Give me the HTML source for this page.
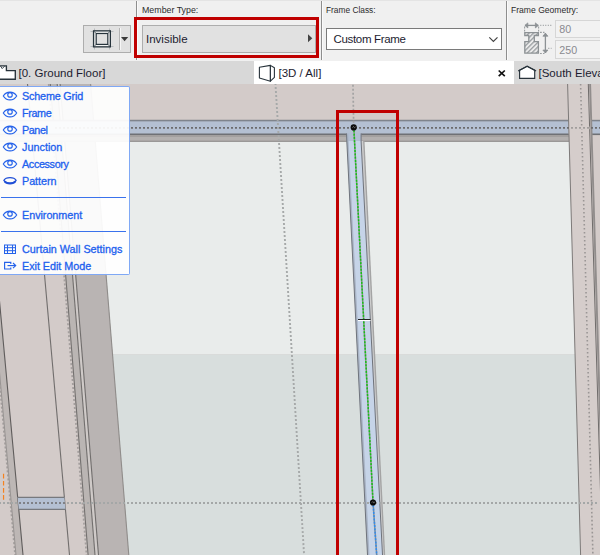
<!DOCTYPE html>
<html><head><meta charset="utf-8">
<style>
html,body{margin:0;padding:0;}
body{width:600px;height:555px;overflow:hidden;position:relative;background:#d3cbc9;font-family:"Liberation Sans",sans-serif;}
.abs{position:absolute;}
#toolbar{left:0;top:0;width:600px;height:61px;background:#f0f0f0;}
#tabbar{left:0;top:61px;width:600px;height:23px;background:#d8d8d8;}
.lbl{position:absolute;top:4.500px;font-size:9.200px;line-height:11px;color:#2c2c2c;white-space:nowrap;transform-origin:0 0;}
.tabtxt{position:absolute;top:5px;font-size:11.5px;line-height:14px;color:#1c1c30;white-space:nowrap;}
.vsep{position:absolute;width:1px;background:#8e8e8e;top:1px;height:59px;}.vsep.w{background:#fafafa;}
.btn{position:absolute;background:#e1e1e1;border:1px solid #adadad;box-sizing:border-box;}
.inp{position:absolute;background:#f2f2f2;border:1px solid #d6d6d6;box-sizing:border-box;font-size:10.700px;color:#8a8a90;line-height:16px;padding-left:3.300px;}
#scene{left:0;top:84px;}
#panel{left:0;top:86px;width:129px;height:187px;background:rgba(255,255,255,0.93);border:1px solid #7fa8f5;border-left:none;border-radius:0 2px 2px 0;}
.mi{position:absolute;left:22px;font-size:10.8px;line-height:13px;color:#1c60ee;white-space:nowrap;-webkit-text-stroke:0.3px #1c60ee;}
.msep{position:absolute;left:1px;width:125px;height:1.200px;background:#3a72ec;}
</style></head><body>

<svg id="scene" class="abs" width="600" height="471" viewBox="0 84 600 471">
  <rect x="0" y="84" width="600" height="471" fill="#d3cbc9"/>
  <!-- glass panels -->
  <polygon points="95,141 569.200,141 575.100,354.300 112.600,354.300" fill="#e9eceb"/>
  <polygon points="112.600,354.300 575.100,354.300 580.600,555 128.800,555" fill="#d8dedd"/>
  <!-- left column shaded faces -->
  <polygon points="50.200,84 57.200,84 95,555 88,555" fill="#bab5b3"/>
  <polygon points="59.400,84 90.600,84 128.800,555 98,555" fill="#b9b4b3"/>
  <polygon points="57.200,84 60.100,84 98.500,555 95,555" fill="#cfcac8"/>
  <polygon points="-20.6,84 -27,84 15.5,555 23,555" fill="#bdb7b5"/>
  <g stroke="#716e6d" stroke-width="1.100" fill="none">
    <line x1="27.5" y1="84" x2="69.5" y2="555"/>
    <line x1="57.2" y1="84" x2="95" y2="555"/>
    <line x1="60.100" y1="84" x2="98.500" y2="555"/>
    <line x1="90.6" y1="84" x2="128.8" y2="555" stroke="#8f8c8a"/>
    <line x1="-27.500" y1="84" x2="15" y2="555" stroke="#a49f9e" stroke-width="1.600" stroke-dasharray="2 2"/><line x1="-26.500" y1="84" x2="16" y2="555" stroke="#8f8c8a" stroke-width="0.800"/>
    <line x1="-20.600" y1="84" x2="23" y2="555" stroke="#5f5c5b" stroke-width="1.100"/>
  </g>
  <line x1="48.700" y1="84" x2="86.500" y2="555" stroke="#a49f9e" stroke-width="1.700" stroke-dasharray="2 2"/><line x1="50.300" y1="84" x2="88.100" y2="555" stroke="#747170" stroke-width="1.100"/>
  <!-- right column -->
  <polygon points="567.600,84 588.600,84 600,478 600,555 580.600,555" fill="#d5cdcb"/>
  
  <!-- horizontal band -->
  <rect x="0" y="120" width="568.500" height="14.500" fill="#b4c0d2"/>
  <rect x="0" y="134" width="569" height="7.800" fill="#a3a09f"/><rect x="0" y="137" width="569" height="3.400" fill="#b3b0af"/>
  <rect x="591.400" y="120" width="9" height="14.500" fill="#b4c0d2"/>
  <g stroke="#6f7175" stroke-width="1">
    <line x1="0" y1="120.400" x2="568.500" y2="120.400" stroke="#7f848c" stroke-width="1.200"/><line x1="0" y1="121.500" x2="568.500" y2="121.500" stroke="#a2abb9"/>
    <line x1="0" y1="134.300" x2="568.700" y2="134.300" stroke-width="1.600"/>
    <line x1="591.400" y1="120.400" x2="600" y2="120.400" stroke="#7f848c" stroke-width="1.200"/><line x1="591.400" y1="121.500" x2="600" y2="121.500" stroke="#a2abb9"/>
    <line x1="591.400" y1="134.300" x2="600" y2="134.300" stroke-width="1.600"/>
  </g>
  <line x1="0" y1="141.5" x2="569" y2="141.5" stroke="#9a9897" stroke-width="1"/>
  <g stroke="#7d7a79" stroke-width="1" fill="none">
    <line x1="567.6" y1="84" x2="580.6" y2="555"/>
    <line x1="588.300" y1="84" x2="602.400" y2="555" stroke="#6f6c6b"/>
    <line x1="590.100" y1="84" x2="604.200" y2="555" stroke="#918d8c" stroke-width="1.900"/>
  </g>
  <line x1="580.6" y1="84" x2="592.9" y2="555" stroke="#9a9695" stroke-width="1.6" stroke-dasharray="1.6 2.4"/>
  <!-- horizontal dotted lines -->
  <line x1="55" y1="127.900" x2="600" y2="127.900" stroke="#6c6c6e" stroke-width="1.900" stroke-dasharray="2 2"/>
  <clipPath id="cc"><polygon points="569.300,120 589.300,120 589.800,136 569.800,136"/></clipPath>
  <g clip-path="url(#cc)"><line x1="55" y1="127.900" x2="600" y2="127.900" stroke="#d5cdcb" stroke-width="2.600"/><line x1="55" y1="127.900" x2="600" y2="127.900" stroke="#a29e9d" stroke-width="1.900" stroke-dasharray="2 2"/></g>
  <!-- small blue band bottom-left -->
  <polygon points="17.600,497 64.300,497 65.500,509.500 18.800,509.500" fill="#b4c0d2"/><line x1="17.600" y1="497.400" x2="64.300" y2="497.400" stroke="#77797d" stroke-width="1.200"/><line x1="18.800" y1="509.300" x2="65.500" y2="509.300" stroke="#77797d" stroke-width="1.200"/>
  <line x1="3.550" y1="473.800" x2="3.550" y2="500" stroke="#f5821f" stroke-width="1.200" stroke-dasharray="4.700 2.400"/>
  <!-- vertical dotted -->
  <line x1="275.400" y1="83" x2="304.200" y2="557" stroke="#a6a9a9" stroke-width="1.900" stroke-dasharray="2 2.008"/>
  <line x1="352.900" y1="80.800" x2="353.700" y2="127" stroke="#a3a3a3" stroke-width="1.700" stroke-dasharray="2 2"/>
  <!-- mullion -->
  <polygon points="361.100,141 363.800,141 384.500,555 382.500,555" fill="#cecece"/>
  <polygon points="346.500,133.400 361.100,133.400 361.100,141 382.500,555 367.500,555 346.800,141" fill="#c6d4e8"/>
  <polygon points="346.500,133 361.100,133 361.100,141 346.800,141" fill="#b2bfd3"/>
  <polygon points="346.500,133.400 346.800,141 367.500,555 369.500,555 348.600,141 348.300,133.400" fill="#aab5c6"/>
  <g stroke="#6f737b" stroke-width="1" fill="none">
    <polyline points="346.500,133.400 346.800,141 367.500,555"/>
    <polyline points="361.100,133.400 361.100,141 382.500,555"/>
    <line x1="363.800" y1="141" x2="384.500" y2="555" stroke="#a4a4a4" stroke-width="1.400"/>
  </g>
  <line x1="-1" y1="503" x2="598" y2="503" stroke="#a4a7a7" stroke-width="1.900" stroke-dasharray="2 2"/>
  <line x1="19" y1="503" x2="65" y2="503" stroke="#7f8186" stroke-width="1.900" stroke-dasharray="2 2"/>
  <line x1="353.800" y1="127" x2="373" y2="502" stroke="#8d8d8d" stroke-width="1.500"/>
  <line x1="353.800" y1="127" x2="373" y2="502" stroke="#14c414" stroke-width="1.500" stroke-dasharray="2 1.300"/>
  <line x1="373" y1="502" x2="376.700" y2="555" stroke="#8d8d8d" stroke-width="1.500"/>
  <line x1="373" y1="502" x2="376.700" y2="555" stroke="#2a8cf4" stroke-width="1.500" stroke-dasharray="2 1.300"/>
  <circle cx="353.700" cy="127.400" r="3.100" fill="#0c0c0c"/>
  <circle cx="373" cy="502.500" r="3.100" fill="#0c0c0c"/>
  <path d="M352.500,127.500 l1,-1 l1,1.200 l1,-0.800" stroke="#8a8a8a" stroke-width="0.800" fill="none"/>
  <path d="M371.800,502.600 l1,-1 l1,1.200 l1,-0.800" stroke="#8a8a8a" stroke-width="0.800" fill="none"/>
  <line x1="358" y1="319.500" x2="370.500" y2="319.500" stroke="#222" stroke-width="1"/>
  <line x1="358" y1="320.500" x2="370.500" y2="320.500" stroke="#fff" stroke-width="1"/>
  <!-- red highlight -->
  <rect x="337.5" y="111.5" width="60" height="460" fill="none" stroke="#c00000" stroke-width="3"/>
</svg>

<div id="toolbar" class="abs">
  <div class="abs" style="left:0;top:0;width:600px;height:1px;background:#e4e4e4"></div>
  <div class="vsep" style="left:136px"></div><div class="vsep w" style="left:137px"></div>
  <div class="vsep" style="left:321px"></div><div class="vsep w" style="left:322px"></div>
  <div class="vsep" style="left:506px"></div><div class="vsep w" style="left:507px"></div>
  <div class="lbl" style="left:141.500px;transform:scaleX(0.962)">Member Type:</div>
  <div class="lbl" style="left:326px;transform:scaleX(0.907)">Frame Class:</div>
  <div class="lbl" style="left:511px;transform:scaleX(0.933)">Frame Geometry:</div>
  <div class="btn" style="left:83px;top:25px;width:48px;height:28px"></div>
  <div class="abs" style="left:119px;top:28px;width:1px;height:22px;background:#b4b4b4"></div>
  <div class="abs" style="left:120px;top:28px;width:1px;height:22px;background:#f6f6f6"></div>
  <svg class="abs" style="left:88px;top:27px" width="44" height="24" viewBox="88 27 44 24">
    <g fill="none" stroke="#b9bcbf" stroke-width="1">
      <line x1="90.500" y1="31.500" x2="113.500" y2="31.500"/><line x1="90.500" y1="46.500" x2="113.500" y2="46.500"/>
      <line x1="94.500" y1="28.500" x2="94.500" y2="49.500"/><line x1="109.500" y1="28.500" x2="109.500" y2="49.500"/>
    </g>
    <rect x="93.550" y="30.850" width="16.800" height="16" fill="#f3f4f4" stroke="#27343c" stroke-width="1.300"/>
    <rect x="96.200" y="33.500" width="11.600" height="10.900" fill="#e1e1e1" stroke="#27343c" stroke-width="1.200"/>
    <g stroke="#27343c" stroke-width="0.700"><line x1="94" y1="31.300" x2="96" y2="33.300"/><line x1="110" y1="31.300" x2="108" y2="33.300"/><line x1="94" y1="46.500" x2="96" y2="44.500"/><line x1="110" y1="46.500" x2="108" y2="44.500"/></g>
    <polygon points="121,37 128.200,37 124.600,41.200" fill="#3a3a3a"/>
  </svg>
  <div class="btn" style="left:142px;top:25px;width:174px;height:28px"></div>
  <div class="txt abs" style="left:146px;top:32px;font-size:11.5px;line-height:14px;color:#1c1c30">Invisible</div>
  <svg class="abs" style="left:304px;top:32px" width="12" height="14" viewBox="304 32 12 14"><polygon points="308,34.300 308,42.200 312.300,38.250" fill="#444"/></svg>
  <div class="abs" style="left:134px;top:17px;width:179px;height:35px;border:3px solid #c00000;box-sizing:content-box"></div>
  <div class="abs" style="left:326px;top:28px;width:176px;height:22px;box-sizing:border-box;border:1px solid #7a7a7a;background:#fff"></div>
  <div class="txt abs" style="left:333.500px;top:32px;font-size:11.5px;line-height:14px;letter-spacing:-0.330px;color:#1c1c30">Custom Frame</div>
  <svg class="abs" style="left:486.500px;top:35px" width="14" height="10"><polyline points="2.300,2.400 6.400,6.500 10.500,2.400" fill="none" stroke="#444" stroke-width="1.200"/></svg>
  <div class="inp" style="left:555px;top:20px;width:50px;height:18px;padding-top:0"><span class="txt" style="position:relative;top:-0.500px">80</span></div>
  <div class="inp" style="left:555px;top:40px;width:50px;height:19px;padding-top:1.200px"><span class="txt">250</span></div>
  <svg class="abs" style="left:518px;top:18px" width="38" height="42" viewBox="518 18 38 42">
    <defs><pattern id="h" width="3.200" height="3.200" patternUnits="userSpaceOnUse" patternTransform="rotate(-45)"><rect width="3.200" height="3.200" fill="#ececec"/><rect width="3.200" height="1.300" fill="#9a9ea1"/></pattern></defs>
    <polygon points="524.800,32.700 538.400,32.700 538.400,35.500 534.300,35.500 534.300,41.600 538.400,41.600 538.400,53.100 524.800,53.100 524.800,41.600 528.800,41.600 528.800,35.500 524.800,35.500" fill="url(#h)" stroke="#8c9194" stroke-width="1.300"/>
    <g stroke="#8c9194" stroke-width="1.300" fill="none">
      <line x1="525" y1="25.400" x2="538.300" y2="25.400"/>
      <polygon points="527.800,22.900 524.900,25.400 527.800,27.900" fill="#8c9194" stroke-width="0.800"/><polygon points="535.400,22.900 538.300,25.400 535.400,27.900" fill="#8c9194" stroke-width="0.800"/>
      <line x1="545.400" y1="33.200" x2="545.400" y2="53"/>
      <polygon points="542.900,36.200 545.400,33.200 547.900,36.200" fill="#8c9194" stroke-width="0.800"/><polygon points="542.900,50.100 545.400,53 547.900,50.100" fill="#8c9194" stroke-width="0.800"/>
    </g>
    <g stroke="#9a9ea1" stroke-width="1.100" fill="none">
      <line x1="524.600" y1="26.500" x2="524.600" y2="31.500" stroke-dasharray="2 1.300"/><line x1="538.600" y1="26.500" x2="538.600" y2="31.500" stroke-dasharray="2 1.300"/>
      <line x1="540.300" y1="25.400" x2="551.500" y2="25.400" stroke-dasharray="1 1.500"/>
      <line x1="540" y1="32.400" x2="544.500" y2="32.400" stroke-dasharray="1.800 1.200"/>
      <line x1="540" y1="53.500" x2="544.500" y2="53.500" stroke-dasharray="1.800 1.200"/>
      <line x1="548.300" y1="48.400" x2="551.500" y2="48.400" stroke-dasharray="1 1.500"/>
    </g>
  </svg>
</div>

<div id="tabbar" class="abs">
  <div class="abs" style="left:254px;top:0;width:260px;height:23px;background:#fff"></div>
  <div class="tabtxt" style="left:18.500px">[0. Ground Floor]</div>
  <div class="tabtxt" style="left:278.500px">[3D / All]</div>
  <div class="tabtxt" style="left:538.500px">[South Eleva</div>
  <svg class="abs" style="left:0;top:1px" width="18" height="22" viewBox="0 62 18 22"><polygon points="-1,65.800 6.400,65.800 6.400,70.600 15.300,70.600 15.300,79.200 -1,79.200" fill="#fff" stroke="#28333b" stroke-width="1.350"/><polyline points="0.600,66.200 2.200,68.600 4.600,66.200" fill="none" stroke="#28333b" stroke-width="0.900"/></svg>
  <svg class="abs" style="left:256px;top:1px" width="22" height="22" viewBox="256 62 22 22"><g fill="#fff" stroke="#28333b" stroke-width="1.100" stroke-linejoin="round"><polygon points="259.400,67.300 270.400,65.400 270.400,81.200 259.400,78"/><polygon points="270.400,65.400 274.400,67.800 274.400,77.400 270.400,81.200"/></g></svg>
  <svg class="abs" style="left:496px;top:7px" width="12" height="12" viewBox="496 68 12 12"><g stroke="#111" stroke-width="1.700"><line x1="498.700" y1="70.500" x2="504.800" y2="76.200"/><line x1="504.800" y1="70.500" x2="498.700" y2="76.200"/></g></svg>
  <svg class="abs" style="left:516px;top:1px" width="22" height="22" viewBox="516 62 22 22"><polygon points="519.600,70.200 527.100,66.300 534.700,70.200 534.700,78.300 519.600,78.300" fill="#fff" stroke="#28333b" stroke-width="1.150"/><polyline points="518.200,70.900 527.100,66.200 536.100,70.900" fill="none" stroke="#28333b" stroke-width="1.150"/></svg>
</div>

<div id="panel" class="abs">
  <svg class="abs" style="left:0;top:0" width="20" height="188" viewBox="0 87 20 188">
    <defs>
      <g id="eye" fill="none" stroke="#2462ea" stroke-width="1.150"><path d="M3.300,0 C5.500,-3.600 8.500,-3.900 10,-3.900 C11.500,-3.900 14.500,-3.600 16.700,0 C14.500,3.600 11.500,3.900 10,3.900 C8.500,3.900 5.500,3.600 3.300,0 Z"/><circle cx="10" cy="-1.100" r="2.250"/></g>
    </defs>
    <use href="#eye" y="96"/><use href="#eye" y="113"/><use href="#eye" y="130"/><use href="#eye" y="147"/><use href="#eye" y="164"/><use href="#eye" y="215"/>
    <path d="M3.900,180.400 C6,176.800 14,176.800 16.100,180.400 C14,184 6,184 3.900,180.400 Z" fill="none" stroke="#1f4fd6" stroke-width="1.250"/>
    <path d="M4.600,181.200 C6.500,184.300 13.500,184.300 15.400,181.200" fill="none" stroke="#1f4fd6" stroke-width="1.900"/>
    <g fill="none" stroke="#2462ea" stroke-width="1"><rect x="4.500" y="245" width="11" height="8.500"/><line x1="7.500" y1="245" x2="7.500" y2="253.500"/><line x1="12.500" y1="245" x2="12.500" y2="253.500"/><line x1="4.500" y1="247.700" x2="15.500" y2="247.700"/><line x1="4.500" y1="250.700" x2="15.500" y2="250.700"/></g>
    <g fill="none" stroke="#2462ea" stroke-width="1.150"><polyline points="10.800,264 10.800,262.300 4.600,262.300 4.600,269 10.800,269 10.800,267.400"/><line x1="7.500" y1="265.600" x2="15.500" y2="265.600"/><polyline points="13,263 15.700,265.600 13,268.200"/></g>
  </svg>
  <div class="mi" style="top:3px;letter-spacing:-0.18px">Scheme Grid</div>
  <div class="mi" style="top:20px;letter-spacing:-0.36px">Frame</div>
  <div class="mi" style="top:37px;letter-spacing:-0.44px">Panel</div>
  <div class="mi" style="top:54px;letter-spacing:0.02px">Junction</div>
  <div class="mi" style="top:71px;letter-spacing:-0.36px">Accessory</div>
  <div class="mi" style="top:88px;letter-spacing:-0.06px">Pattern</div>
  <div class="msep" style="top:110px"></div>
  <div class="mi" style="top:122px;letter-spacing:-0.04px">Environment</div>
  <div class="msep" style="top:144px"></div>
  <div class="mi" style="top:156px;letter-spacing:0.0px">Curtain Wall Settings</div>
  <div class="mi" style="top:173px;letter-spacing:-0.03px">Exit Edit Mode</div>
</div>
</body></html>
